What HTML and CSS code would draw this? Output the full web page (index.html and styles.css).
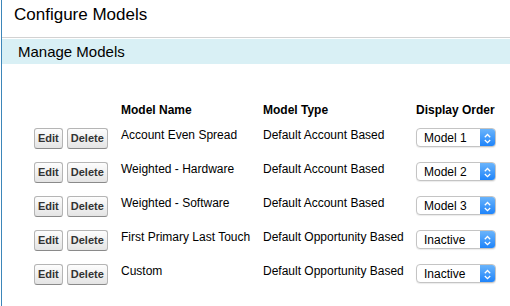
FILE: index.html
```html
<!DOCTYPE html>
<html lang="en">
<head>
  <meta charset="UTF-8">
  <title>Configure Models</title>
  <link rel="stylesheet" href="styles.css">
</head>
<body>
  <div class="page">
    <h1 class="titulo">Configure Models</h1>
    <h2 class="secao">Manage Models</h2>

    <div class="modelos">
      <div class="cab"></div>
      <div class="cab">Model Name</div>
      <div class="cab">Model Type</div>
      <div class="cab">Display Order</div>

      <div class="acoes"><button class="btn">Edit</button><button class="btn">Delete</button></div>
      <div class="cel">Account Even Spread</div>
      <div class="cel">Default Account Based</div>
      <div class="cel"><div class="sel"><span class="valor">Model 1</span><span class="seta"><svg width="15" height="19" viewBox="0 0 15 19"><path d="M4.8 8.2 L7.5 5.5 L10.2 8.2 M4.8 11 L7.5 13.7 L10.2 11" fill="none" stroke="#fff" stroke-width="1.3"/></svg></span></div></div>

      <div class="acoes"><button class="btn">Edit</button><button class="btn">Delete</button></div>
      <div class="cel">Weighted - Hardware</div>
      <div class="cel">Default Account Based</div>
      <div class="cel"><div class="sel"><span class="valor">Model 2</span><span class="seta"><svg width="15" height="19" viewBox="0 0 15 19"><path d="M4.8 8.2 L7.5 5.5 L10.2 8.2 M4.8 11 L7.5 13.7 L10.2 11" fill="none" stroke="#fff" stroke-width="1.3"/></svg></span></div></div>

      <div class="acoes"><button class="btn">Edit</button><button class="btn">Delete</button></div>
      <div class="cel">Weighted - Software</div>
      <div class="cel">Default Account Based</div>
      <div class="cel"><div class="sel"><span class="valor">Model 3</span><span class="seta"><svg width="15" height="19" viewBox="0 0 15 19"><path d="M4.8 8.2 L7.5 5.5 L10.2 8.2 M4.8 11 L7.5 13.7 L10.2 11" fill="none" stroke="#fff" stroke-width="1.3"/></svg></span></div></div>

      <div class="acoes"><button class="btn">Edit</button><button class="btn">Delete</button></div>
      <div class="cel">First Primary Last Touch</div>
      <div class="cel">Default Opportunity Based</div>
      <div class="cel"><div class="sel"><span class="valor">Inactive</span><span class="seta"><svg width="15" height="19" viewBox="0 0 15 19"><path d="M4.8 8.2 L7.5 5.5 L10.2 8.2 M4.8 11 L7.5 13.7 L10.2 11" fill="none" stroke="#fff" stroke-width="1.3"/></svg></span></div></div>

      <div class="acoes"><button class="btn">Edit</button><button class="btn">Delete</button></div>
      <div class="cel">Custom</div>
      <div class="cel">Default Opportunity Based</div>
      <div class="cel"><div class="sel"><span class="valor">Inactive</span><span class="seta"><svg width="15" height="19" viewBox="0 0 15 19"><path d="M4.8 8.2 L7.5 5.5 L10.2 8.2 M4.8 11 L7.5 13.7 L10.2 11" fill="none" stroke="#fff" stroke-width="1.3"/></svg></span></div></div>
    </div>
  </div>
</body>
</html>
```

FILE: styles.css
```css
* {
  box-sizing: border-box;
  margin: 0;
  padding: 0;
}

body {
  background: #fff;
  font-family: "Liberation Sans", Arial, sans-serif;
  color: #000;
}

.page {
  margin-left: 1px;
  border-left: 1px solid #3d86b9;
  min-height: 306px;
}

.titulo {
  font-size: 17px;
  font-weight: normal;
  line-height: 20px;
  padding: 5px 0 12px 12px;
  border-bottom: 1px solid #d2d2d2;
}

.secao {
  margin-top: 1px;
  background: #d9f0f5;
  font-size: 15px;
  font-weight: normal;
  line-height: 25px;
  height: 25px;
  padding-left: 16px;
}

.modelos {
  display: grid;
  grid-template-columns: 87px 142px 153px 80px;
  grid-template-rows: 25px;
  grid-auto-rows: 34px;
  margin-top: 39px;
  padding-left: 32px;
  font-size: 12px;
  line-height: 14px;
}

.cab {
  font-weight: bold;
}

.acoes {
  display: flex;
  gap: 4px;
  align-items: flex-start;
}

.btn {
  font-family: "Liberation Sans", Arial, sans-serif;
  font-size: 11px;
  font-weight: bold;
  color: #333;
  height: 21px;
  line-height: 19px;
  padding: 0 3px;
  border: 1px solid #b5b5b5;
  border-bottom-color: #8a8a8a;
  border-radius: 3px;
  background: linear-gradient(#fdfdfd, #e4e4e4);
}

.sel {
  display: flex;
  width: 80px;
  height: 19px;
  border: 1px solid #c4c4c4;
  border-radius: 4px;
  background: #fff;
  box-shadow: 0 1px 1px rgba(0, 0, 0, 0.08);
  overflow: hidden;
}

.valor {
  flex: 1;
  padding-left: 7px;
  line-height: 18px;
  font-size: 12px;
}

.seta {
  width: 15px;
  display: flex;
  background: linear-gradient(#6ab4fb, #1f84fa);
}
```
